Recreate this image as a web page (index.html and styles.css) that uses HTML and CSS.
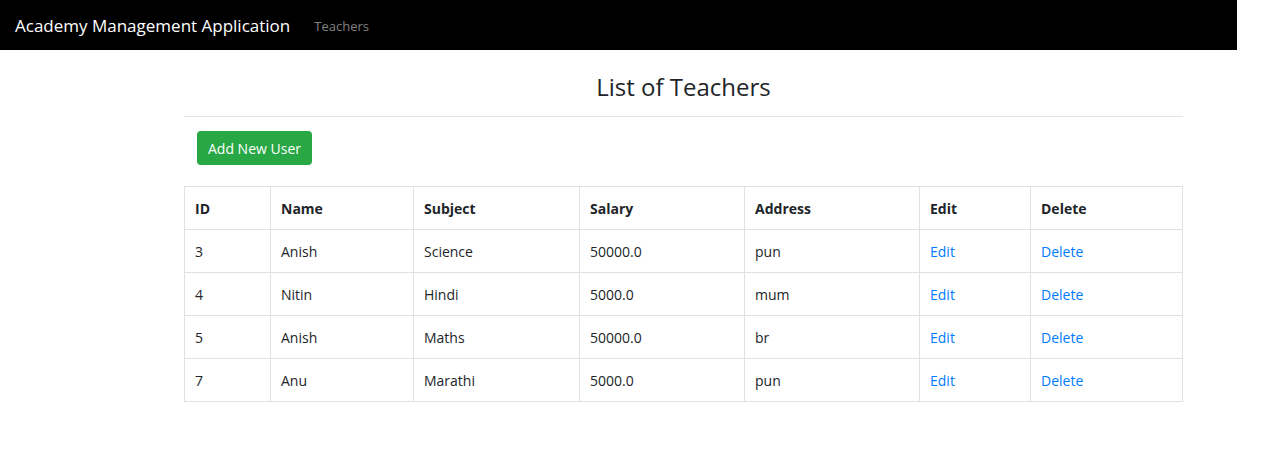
FILE: index.html
```html
<!DOCTYPE html>
<html lang="en">
<head>
<meta charset="utf-8">
<title>Academy Management Application</title>
<link rel="stylesheet" href="styles.css">
</head>
<body>
<header>
  <nav class="navbar">
    <a class="brand" href="#">Academy Management Application</a>
    <a class="nav-link" href="#">Teachers</a>
  </nav>
</header>
<main class="container">
  <h1 class="title">List of Teachers</h1>
  <hr class="rule">
  <div class="actions"><button class="btn" type="button">Add New User</button></div>
  <table class="table">
    <colgroup><col class="c-id"><col class="c-name"><col class="c-subject"><col class="c-salary"><col class="c-address"><col class="c-edit"><col></colgroup>
    <thead>
      <tr><th>ID</th><th>Name</th><th>Subject</th><th>Salary</th><th>Address</th><th>Edit</th><th>Delete</th></tr>
    </thead>
    <tbody>
      <tr><td>3</td><td>Anish</td><td>Science</td><td>50000.0</td><td>pun</td><td><a href="#">Edit</a></td><td><a href="#">Delete</a></td></tr>
      <tr><td>4</td><td>Nitin</td><td>Hindi</td><td>5000.0</td><td>mum</td><td><a href="#">Edit</a></td><td><a href="#">Delete</a></td></tr>
      <tr><td>5</td><td>Anish</td><td>Maths</td><td>50000.0</td><td>br</td><td><a href="#">Edit</a></td><td><a href="#">Delete</a></td></tr>
      <tr><td>7</td><td>Anu</td><td>Marathi</td><td>5000.0</td><td>pun</td><td><a href="#">Edit</a></td><td><a href="#">Delete</a></td></tr>
    </tbody>
  </table>
</main>
</body>
</html>
```
FILE: styles.css
```css
* { box-sizing: border-box; }

body {
  margin: 0;
  padding-right: 29px;
  background: #fff;
  color: #212529;
  font-family: "Segoe UI", "Open Sans", "Noto Sans", sans-serif;
  font-size: 14px;
  line-height: 22px;
}

a { color: #007bff; text-decoration: none; }

.navbar {
  display: flex;
  align-items: center;
  gap: 24px;
  height: 50px;
  padding: 2px 15px 0;
  background: #000;
}

.brand { color: #fff; font-size: 17px; }

.nav-link { color: #808080; font-size: 13px; }

.container {
  margin: 0 54px 0 184px;
  padding-top: 22px;
}

.title {
  margin: 0 0 14px;
  font-size: 24px;
  font-weight: 500;
  line-height: 30px;
  text-align: center;
}

.rule {
  margin: 0;
  border: 0;
  border-top: 1px solid #e5e5e5;
}

.actions { padding: 14px 13px 21px; }

.btn {
  display: block;
  height: 34px;
  padding: 2px 11px 0;
  border: 0;
  border-radius: 4px;
  background: #28a745;
  color: #fff;
  font: inherit;
}

.table {
  width: 100%;
  border-collapse: collapse;
  table-layout: fixed;
}

.table th,
.table td {
  height: 43px;
  padding: 2px 10px 0;
  border: 1px solid #dee2e6;
  text-align: left;
}

.table th { font-weight: 700; }

.c-id { width: 86px; }
.c-name { width: 143px; }
.c-subject { width: 166px; }
.c-salary { width: 165px; }
.c-address { width: 175px; }
.c-edit { width: 111px; }
```
